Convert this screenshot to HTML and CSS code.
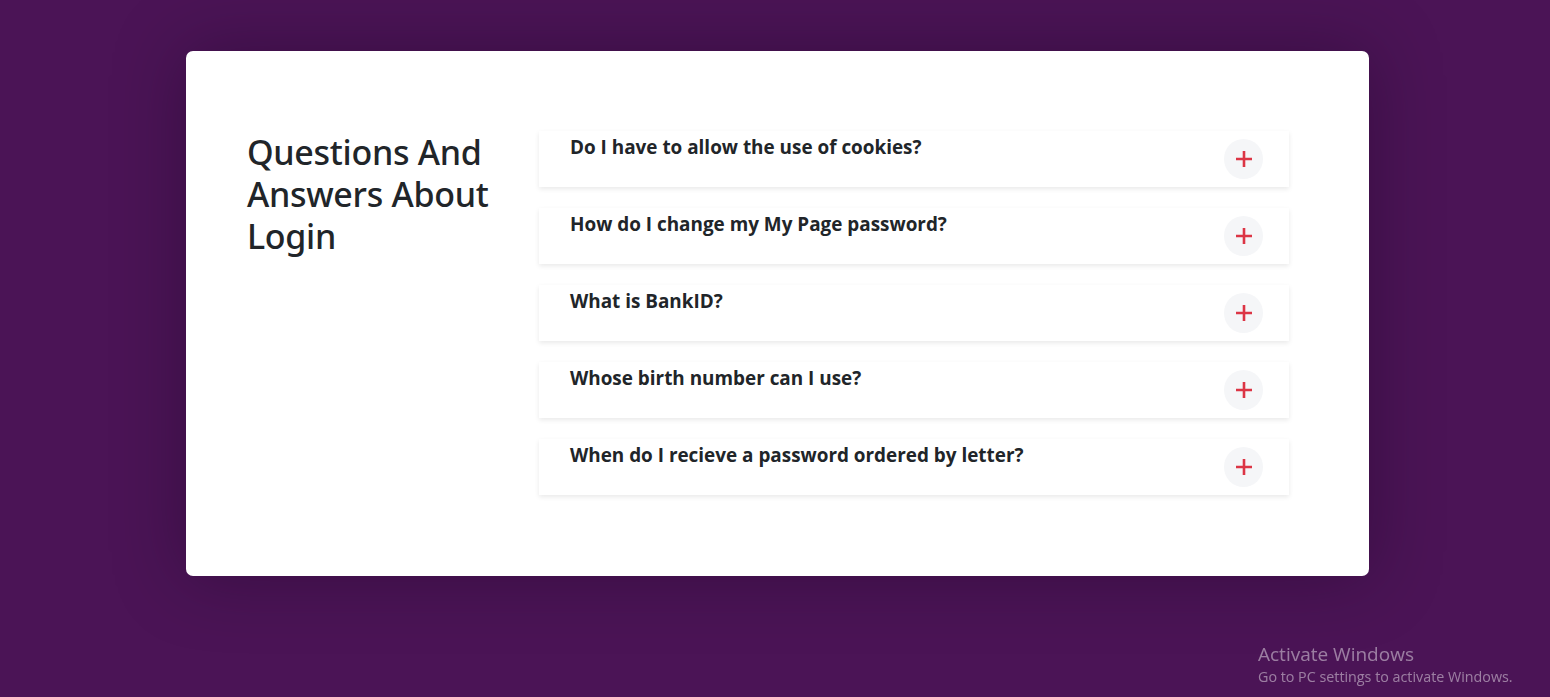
FILE: index.html
```html
<!DOCTYPE html>
<html lang="en">
<head>
<meta charset="utf-8">
<title>Questions And Answers About Login</title>
<link rel="stylesheet" href="styles.css">
</head>
<body>
<main class="page">
  <section class="faq-card">
    <h2 class="faq-title">Questions And Answers About Login</h2>
    <div class="faq-list">
      <div class="faq-item">
        <h5 class="faq-q">Do I have to allow the use of cookies?</h5>
        <button class="faq-toggle" aria-label="Expand"><svg viewBox="0 0 16 16" width="16" height="16"><path d="M8 0v16M0 8h16" stroke="#dc3545" stroke-width="2.6" fill="none"/></svg></button>
      </div>
      <div class="faq-item">
        <h5 class="faq-q">How do I change my My Page password?</h5>
        <button class="faq-toggle" aria-label="Expand"><svg viewBox="0 0 16 16" width="16" height="16"><path d="M8 0v16M0 8h16" stroke="#dc3545" stroke-width="2.6" fill="none"/></svg></button>
      </div>
      <div class="faq-item">
        <h5 class="faq-q">What is BankID?</h5>
        <button class="faq-toggle" aria-label="Expand"><svg viewBox="0 0 16 16" width="16" height="16"><path d="M8 0v16M0 8h16" stroke="#dc3545" stroke-width="2.6" fill="none"/></svg></button>
      </div>
      <div class="faq-item">
        <h5 class="faq-q">Whose birth number can I use?</h5>
        <button class="faq-toggle" aria-label="Expand"><svg viewBox="0 0 16 16" width="16" height="16"><path d="M8 0v16M0 8h16" stroke="#dc3545" stroke-width="2.6" fill="none"/></svg></button>
      </div>
      <div class="faq-item">
        <h5 class="faq-q">When do I recieve a password ordered by letter?</h5>
        <button class="faq-toggle" aria-label="Expand"><svg viewBox="0 0 16 16" width="16" height="16"><path d="M8 0v16M0 8h16" stroke="#dc3545" stroke-width="2.6" fill="none"/></svg></button>
      </div>
    </div>
  </section>
</main>
<div class="watermark">
  <div class="wm-title">Activate Windows</div>
  <div class="wm-sub">Go to PC settings to activate Windows.</div>
</div>
</body>
</html>
```
FILE: styles.css
```css
* { box-sizing: border-box; }
html, body {
  margin: 0;
  height: 100%;
}
body {
  background: #4b1456;
  font-family: "Open Sans", "Noto Sans", sans-serif;
  color: #212529;
  overflow: hidden;
}
.page {
  padding: 51px 181px 0 186px;
}
.faq-card {
  background: #fff;
  border-radius: 7px;
  box-shadow: 0 0 70px rgba(20, 0, 30, 0.35);
  padding: 80px 80px 81px 61px;
  display: grid;
  grid-template-columns: 292px 1fr;
  min-height: 525px;
}
.faq-title {
  margin: 0;
  width: 262px;
  font-family: "Noto Sans", "Open Sans", sans-serif;
  font-size: 34px;
  font-weight: 500;
  line-height: 42px;
  letter-spacing: -0.3px;
  color: #212529;
}
.faq-list {
  display: flex;
  flex-direction: column;
  gap: 21px;
}
.faq-item {
  background: #fff;
  height: 56px;
  padding: 0 26px 0 31px;
  display: flex;
  align-items: flex-start;
  justify-content: space-between;
  box-shadow: 0 2px 5px rgba(0, 0, 0, 0.09);
}
.faq-q {
  margin: 0;
  padding-top: 4px;
  font-size: 18.9px;
  font-weight: 700;
  line-height: 24px;
  color: #212529;
}
.faq-toggle {
  margin-top: 8px;
  width: 39px;
  height: 40px;
  border: 0;
  border-radius: 50%;
  background: #f5f6f8;
  display: flex;
  align-items: center;
  justify-content: center;
  padding: 0;
}
.watermark {
  position: fixed;
  left: 1258px;
  top: 642px;
  color: rgba(255, 255, 255, 0.45);
  font-family: "Open Sans", "Noto Sans", sans-serif;
}
.wm-title {
  font-size: 19px;
  line-height: 24px;
  font-weight: 400;
}
.wm-sub {
  font-size: 14.3px;
  line-height: 22px;
}
```
